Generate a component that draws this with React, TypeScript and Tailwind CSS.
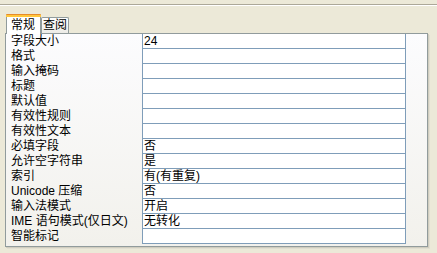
import React from "react";

const rows: [string, string][] = [
  ["字段大小", "24"],
  ["格式", ""],
  ["输入掩码", ""],
  ["标题", ""],
  ["默认值", ""],
  ["有效性规则", ""],
  ["有效性文本", ""],
  ["必填字段", "否"],
  ["允许空字符串", "是"],
  ["索引", "有(有重复)"],
  ["Unicode 压缩", "否"],
  ["输入法模式", "开启"],
  ["IME 语句模式(仅日文)", "无转化"],
  ["智能标记", ""],
];

export default function App() {
  return (
    <div
      className="w-[437px] h-[253px] bg-[#ece9d8] overflow-hidden text-[12px] leading-[15px] text-black"
      style={{ fontFamily: '"Liberation Sans", "Noto Sans CJK SC", sans-serif' }}
    >
      <div className="h-[4px]" />
      <div className="h-[2px] border-t border-[#aca899] border-b border-b-white" />
      <div className="flex items-end pl-[6px] pt-[7px] h-[27px]">
        <div className="relative z-10 w-[35px] h-[20px] -mb-px bg-white border-x border-[#919b9c] rounded-t-[3px] flex flex-col">
          <div className="h-[1px] bg-[#e68b2c] rounded-t-[3px] -mx-px" />
          <div className="h-[2px] bg-[#ffc73c] -mx-px" />
          <div className="flex-1 flex items-start justify-center pt-[1px] pr-[1px]">常规</div>
        </div>
        <div className="w-[28px] h-[16px] border border-b-0 border-[#919b9c] rounded-t-[2px] bg-gradient-to-b from-white to-[#ecebe6] flex items-center justify-center">
          查阅
        </div>
      </div>
      <div className="ml-[5px] w-[423px] h-[214px] border border-[#919b9c] bg-gradient-to-b from-[#fcfcfe] to-[#f2f1ec] shadow-[1px_1px_0_#d0cdbf,2px_2px_0_#e2dfd2]">
        <div className="flex flex-col">
          {rows.map(([label, value], i) => (
            <div key={i} className="flex h-[15px]">
              <div className="w-[136px] pl-[5px] whitespace-nowrap">{label}</div>
              <div className="w-[264px] border-x border-b border-[#7f9db9] bg-white pl-[1px] whitespace-nowrap">
                {value}
              </div>
            </div>
          ))}
        </div>
      </div>
    </div>
  );
}
